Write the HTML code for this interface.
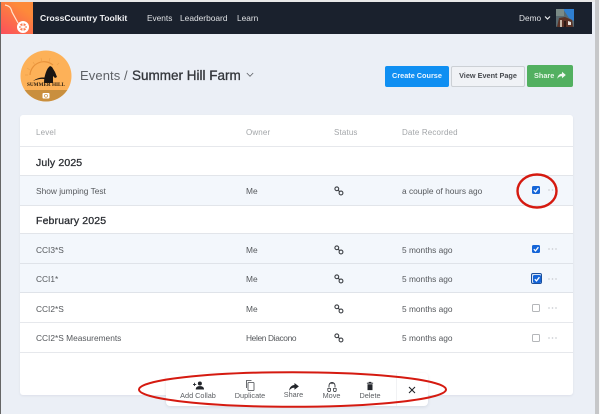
<!DOCTYPE html>
<html><head><meta charset="utf-8"><style>
*{box-sizing:border-box}
html,body{margin:0;padding:0;width:600px;height:414px;overflow:hidden;background:#ebeff6;font-family:"Liberation Sans",sans-serif;color:#3c3f44}
#w{position:absolute;left:0;top:0;width:600px;height:414px;filter:blur(.3px)}
.a{position:absolute;white-space:nowrap}
.t{font-size:8.350px;line-height:10px;color:#55585c}
.h{font-size:8px;line-height:10px;color:#a3a6a9;letter-spacing:.15px}
.g{font-size:10.500px;line-height:12px;color:#2b2e33;letter-spacing:.15px;-webkit-text-stroke:.3px #2b2e33}
.row{position:absolute;left:20px;width:553px}
.cb{position:absolute;left:532px;width:8px;height:8px;border-radius:1.500px;background:#1565d8}
.cb svg{position:absolute;left:0;top:0}
.ub{position:absolute;left:532px;width:8px;height:8px;border-radius:1.500px;background:#fff;border:1px solid #b4b6b9}
.d{position:absolute;left:548px;width:9px;height:2px;background:radial-gradient(circle at 1px 1px,#cdd0d4 .7px,transparent .9px) 0 0/3.500px 2px repeat-x}
.lk{position:absolute;left:334px}
.bl{font-size:7.300px;line-height:9px;color:#5b5e62;text-align:center;position:absolute;white-space:nowrap;transform:translateX(-50%)}
</style></head><body><div id="w">
<div class="a" style="left:0;top:0;width:1px;height:414px;background:#666"></div>
<div class="a" style="left:0;top:0;width:600px;height:2px;background:#e8e8e8"></div>
<div class="a" style="left:1px;top:2px;width:591px;height:32px;background:#1a212d"></div>
<div class="a" style="left:595px;top:0;width:4px;height:414px;background:#c6c7c9"></div>
<div class="a" style="left:599px;top:0;width:1px;height:414px;background:#fafafa"></div>
<div class="a" style="left:1px;top:2px;width:32px;height:32px;background:linear-gradient(35deg,#fb4f5c,#fd8a3a 75%)"></div>
<svg class="a" style="left:1px;top:2px" width="32" height="32" viewBox="0 0 32 32"><path d="M4 3 C9 4 10 6 11 10 L17 21" fill="none" stroke="#ffe6cf" stroke-width="1.200"/><circle cx="22" cy="25" r="6" fill="#fff"/><circle cx="22" cy="25" r="3.800" fill="#fb7a50"/><path d="M22 20v10M17.500 23l9 4M26.500 23l-9 4" stroke="#fff" stroke-width="1.100"/></svg>
<div class="a" style="left:40px;top:12px;font-size:8.600px;line-height:12px;font-weight:bold;color:#f1f2f4">CrossCountry Toolkit</div>
<div class="a" style="left:147px;top:12px;font-size:8.300px;line-height:12px;color:#dfe1e4">Events</div>
<div class="a" style="left:180px;top:12px;font-size:8.400px;line-height:12px;color:#dfe1e4">Leaderboard</div>
<div class="a" style="left:237px;top:12px;font-size:8.300px;line-height:12px;color:#dfe1e4">Learn</div>
<div class="a" style="left:519px;top:12px;font-size:8.300px;line-height:12px;color:#dfe1e4">Demo</div>
<svg class="a" style="left:544px;top:15px" width="7" height="6" viewBox="0 0 7 6"><path d="M1 1.500L3.500 4L6 1.500" fill="none" stroke="#eceef0" stroke-width="1.200"/></svg>
<svg class="a" style="left:556px;top:9px" width="18" height="18" viewBox="0 0 18 18"><rect width="18" height="18" rx="1" fill="#5a6a70"/><path d="M7 0H18V12L13 9Z" fill="#2f7fd0"/><rect x="0" y="0" width="8" height="7" fill="#7a8a86"/><path d="M1 18L3 9L9 8L16 11L17 18Z" fill="#5b3327"/><path d="M12 12l3 1v3h-3z" fill="#e8e0d8"/><path d="M4 11h2v7H4z" fill="#c9b8a8"/><path d="M8 12h2v6H8z" fill="#2d1a14"/></svg>

<svg class="a" style="left:20px;top:50px" width="52" height="52" viewBox="0 0 52 52"><defs><clipPath id="c"><circle cx="26" cy="26" r="25.500"/></clipPath></defs><g clip-path="url(#c)"><rect width="52" height="52" fill="#fdb158"/><rect y="40" width="52" height="12" fill="#c98f3e"/><path d="M10 25A14 14 0 0 1 33 15" fill="none" stroke="#e8923a" stroke-width="1.200"/><path d="M7 18l3 2M13 12l2 3M21 8l1 4M30 8l-1 4M39 13l-2 2M5 25h3" stroke="#eda04a" stroke-width=".7"/><path d="M13 31C18 27 24 27 28 28L28 30 C23 28 18 29 13 31Z" fill="#1a1512"/><path d="M24 33C24 27 26 21 28 18L30 16 32 17 35 22 37 27 35 28 33 26 33 33Z" fill="#1a1512"/></g></svg>
<div class="a" style="left:20px;top:82px;width:52px;text-align:center;font:bold 5.200px/6px 'Liberation Serif',serif;color:#2b1d0e">SUMMER HILL</div>
<svg class="a" style="left:42px;top:92px" width="8" height="7" viewBox="0 0 8 7"><rect x=".500" y="1" width="7" height="5.500" rx="1" fill="#fff"/><circle cx="4" cy="3.800" r="1.500" fill="none" stroke="#c98f3e" stroke-width=".7"/></svg>

<div class="a" style="left:80px;top:67px;font-size:13px;line-height:17px;color:#5e6166;letter-spacing:.1px">Events /</div>
<div class="a" style="left:132px;top:67px;font-size:13.500px;line-height:17px;color:#33363b;-webkit-text-stroke:.3px #33363b">Summer Hill Farm</div>
<svg class="a" style="left:246px;top:72px" width="8" height="6" viewBox="0 0 8 6"><path d="M.8 1L4 4.300L7.200 1" fill="none" stroke="#5e6166" stroke-width=".8"/></svg>

<div class="a" style="left:385px;top:66px;width:64px;height:21px;border-radius:2px;background:#0f8ff2;color:#eaf5ff;font-size:7.300px;font-weight:bold;line-height:20px;text-align:center">Create Course</div>
<div class="a" style="left:451px;top:66px;width:74px;height:21px;border-radius:2px;background:#f0f2f6;border:1px solid #ccd0d5;color:#484b50;font-size:7.300px;font-weight:bold;line-height:18px;text-align:center">View Event Page</div>
<div class="a" style="left:527px;top:65px;width:46px;height:22px;border-radius:2px;background:#52b060"></div>
<div class="a" style="left:534px;top:70px;color:#e6f5e8;font-size:7.300px;font-weight:bold;line-height:11px">Share</div>
<svg class="a" style="left:557px;top:71px" width="9" height="9" viewBox="0 0 9 9"><path d="M5 .8L8.800 4 5 7.200V5.200C3 5.100 1.500 5.800.3 7.800.6 4.800 2.200 2.800 5 2.700Z" fill="#eef8ef"/></svg>

<div class="a" style="left:20px;top:115px;width:553px;height:280px;background:#fff;border-radius:3px;box-shadow:0 1px 2px rgba(60,70,90,.08)"></div>
<div class="a h" style="left:36px;top:128px">Level</div>
<div class="a h" style="left:246px;top:128px">Owner</div>
<div class="a h" style="left:334px;top:128px">Status</div>
<div class="a h" style="left:402px;top:128px">Date Recorded</div>
<div class="row" style="top:146px;height:1px;background:#e6e8ec"></div>
<div class="a g" style="left:36px;top:157px">July 2025</div>
<div class="row" style="top:175px;height:31px;background:#f3f7fc;border-top:1px solid #e2e5ea;border-bottom:1px solid #e2e5ea"></div>
<div class="a g" style="left:36px;top:215px">February 2025</div>
<div class="row" style="top:233px;height:31px;background:#f3f7fc;border-top:1px solid #e2e5ea;border-bottom:1px solid #dfe3e9"></div>
<div class="row" style="top:264px;height:29px;background:#f3f7fc;border-bottom:1px solid #dfe3e9"></div>
<div class="row" style="top:293px;height:30px;background:#fff;border-bottom:1px solid #e6e8ec"></div>
<div class="row" style="top:323px;height:30px;background:#fff;border-bottom:1px solid #e6e8ec"></div>

<div class="a t" style="left:36px;top:186px">Show jumping Test</div><div class="a t" style="left:246px;top:186px">Me</div><div class="a t" style="left:402px;top:186px">a couple of hours ago</div>
<div class="a t" style="left:36px;top:245px">CCI3*S</div><div class="a t" style="left:246px;top:245px">Me</div><div class="a t" style="left:402px;top:245px">5 months ago</div>
<div class="a t" style="left:36px;top:274px">CCI1*</div><div class="a t" style="left:246px;top:274px">Me</div><div class="a t" style="left:402px;top:274px">5 months ago</div>
<div class="a t" style="left:36px;top:304px">CCI2*S</div><div class="a t" style="left:246px;top:304px">Me</div><div class="a t" style="left:402px;top:304px">5 months ago</div>
<div class="a t" style="left:36px;top:333px">CCI2*S Measurements</div><div class="a t" style="left:246px;top:333px;letter-spacing:-.35px">Helen Diacono</div><div class="a t" style="left:402px;top:333px">5 months ago</div>

<svg width="0" height="0" style="position:absolute"><defs><g id="lnk" fill="none" stroke="#3c3f44" stroke-width="1.100"><circle cx="2.800" cy="2.800" r="1.900"/><circle cx="7" cy="7" r="1.900"/><path d="M4 4L5.800 5.800"/></g><path id="chk" d="M1.800 4.200L3.500 5.900L6.400 2.200" fill="none" stroke="#fff" stroke-width="1.300"/></defs></svg>
<svg class="lk a" style="top:186px" width="10" height="10"><use href="#lnk"/></svg>
<svg class="lk a" style="top:245px" width="10" height="10"><use href="#lnk"/></svg>
<svg class="lk a" style="top:274px" width="10" height="10"><use href="#lnk"/></svg>
<svg class="lk a" style="top:304px" width="10" height="10"><use href="#lnk"/></svg>
<svg class="lk a" style="top:333px" width="10" height="10"><use href="#lnk"/></svg>

<div class="cb" style="top:186px"><svg width="8" height="8"><use href="#chk"/></svg></div>
<div class="cb" style="top:245px"><svg width="8" height="8"><use href="#chk"/></svg></div>
<div class="a" style="left:531px;top:273px;width:11px;height:11px;border:1px solid #1b4f9c;border-radius:2px;background:#d7e4f6"></div>
<div class="cb" style="top:274.500px;left:532.500px"><svg width="8" height="8"><use href="#chk"/></svg></div>
<div class="ub" style="top:304px"></div>
<div class="ub" style="top:334px"></div>
<div class="d" style="top:189px"></div><div class="d" style="top:248px"></div><div class="d" style="top:278px"></div><div class="d" style="top:307px"></div><div class="d" style="top:337px"></div>

<div class="a" style="left:166px;top:373px;width:262px;height:33px;background:#fff;border-radius:4px;box-shadow:0 1px 3px rgba(60,70,90,.12)"></div>
<div class="a" style="left:396px;top:373px;width:1px;height:33px;background:#f1f2f4"></div>
<svg class="a" style="left:193px;top:381px" width="11" height="9" viewBox="0 0 12 9"><circle cx="7.500" cy="2.300" r="2.200" fill="#22252a"/><path d="M3 8.800C3 6 5 5.200 7.500 5.200S12 6 12 8.800Z" fill="#22252a"/><path d="M0 3.300h3.500M1.700 1.500v3.600" stroke="#22252a" stroke-width=".9"/></svg>
<svg class="a" style="left:245px;top:380px" width="10" height="11" viewBox="0 0 10 11"><path d="M6.500.5H1.500V8" fill="none" stroke="#44474c" stroke-width=".8"/><rect x="3" y="2.500" width="6" height="8" rx=".6" fill="none" stroke="#44474c" stroke-width=".8"/></svg>
<svg class="a" style="left:289px;top:383px" width="10" height="8" viewBox="0 0 11 9"><path d="M6 0L11 3.800 6 7.600V5.300C3.500 5.200 1.500 6.300 0 8.800.3 5 2.700 2.500 6 2.300Z" fill="#22252a"/></svg>
<svg class="a" style="left:327px;top:381px" width="10" height="11" viewBox="0 0 10 11"><path d="M2 6.500V4.500A3 3 0 0 1 8 4.500V6.500" fill="none" stroke="#33363b" stroke-width=".9"/><path d="M.8 7.500H3.500V9.300A1.300 1.300 0 0 1 .8 9.300ZM6.500 7.500H9.200V9.300A1.300 1.300 0 0 1 6.500 9.300Z" fill="none" stroke="#33363b" stroke-width=".8"/><path d="M3.800 3L5 1.500 6.200 3" fill="none" stroke="#33363b" stroke-width=".8"/></svg>
<svg class="a" style="left:366px;top:381px" width="8" height="10" viewBox="0 0 9 10"><path d="M1 1.300H8V2.300H1ZM3 .3H6V1.300H3ZM1.700 3H7.300V9.700H1.700Z" fill="#22252a"/></svg>
<div class="bl" style="left:198px;top:391px">Add Collab</div>
<div class="bl" style="left:250px;top:391px">Duplicate</div>
<div class="bl" style="left:293.500px;top:390px">Share</div>
<div class="bl" style="left:331.500px;top:391px">Move</div>
<div class="bl" style="left:370px;top:391px">Delete</div>
<svg class="a" style="left:408px;top:386px" width="8" height="8" viewBox="0 0 8 8"><path d="M1 1L7 7M7 1L1 7" stroke="#22252a" stroke-width="1.100"/></svg>

<svg class="a" style="left:0;top:0" width="600" height="414" viewBox="0 0 600 414" fill="none"><ellipse cx="537" cy="191" rx="19.500" ry="16.500" stroke="#d51a10" stroke-width="2.400"/><ellipse cx="292.500" cy="389.500" rx="153.500" ry="17.300" stroke="#d51a10" stroke-width="2"/></svg>
</div></body></html>
